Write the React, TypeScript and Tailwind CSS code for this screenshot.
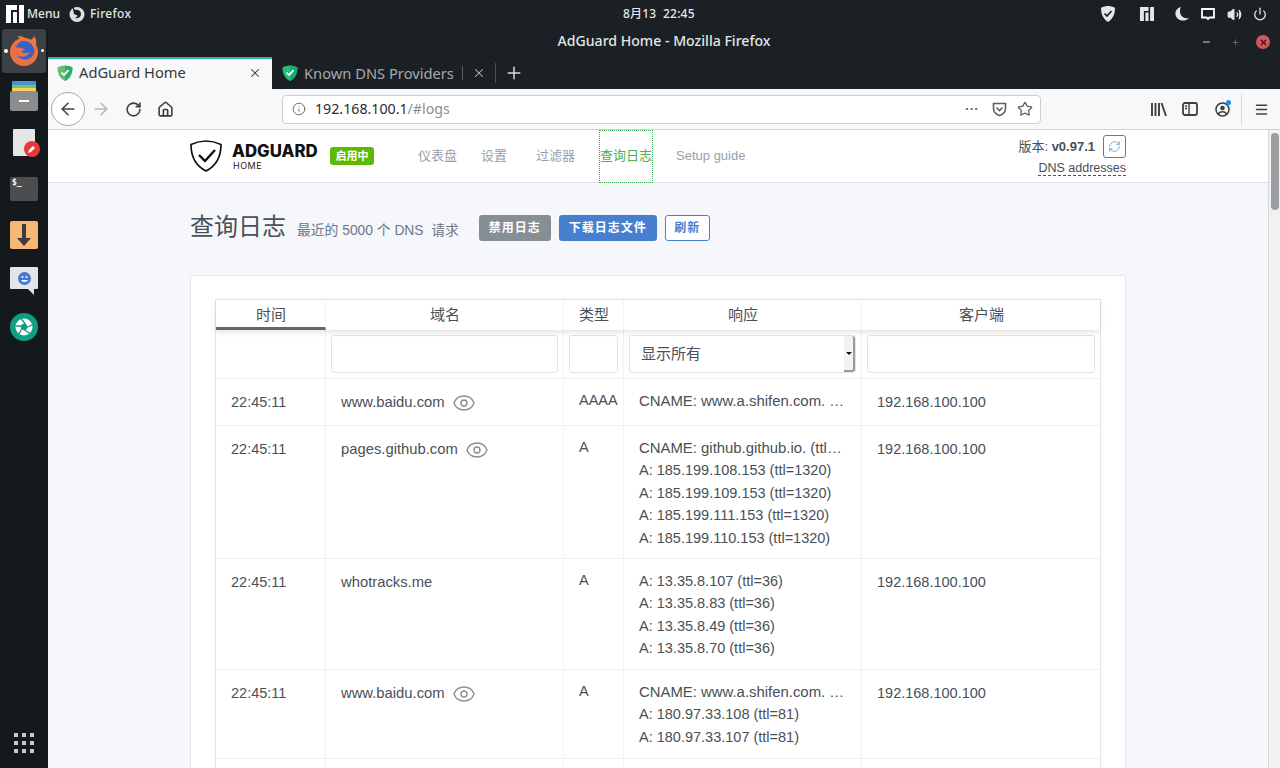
import React from "react";
import { ArrowLeft, ArrowRight, RotateCw, Home, Info, Star, Plus, X, Volume2, Power, Eye, RefreshCw, Menu as MenuIcon } from "lucide-react";

const sans = "[font-family:'Liberation_Sans','Noto_Sans_CJK_SC',sans-serif]";

function Shield({ c = "#68bc71", s = 16 }: { c?: string; s?: number }) {
  return (
    <svg width={s} height={s} viewBox="0 0 16 16" className="shrink-0">
      <path d="M8 0.5C5.5 0.5 3 1.2 0.5 2.4 0.5 9 3 13.5 8 16c5-2.5 7.5-7 7.5-13.6C13 1.2 10.5 0.5 8 0.5z" fill={c} />
      <path d="M8 0.5v15.5c5-2.5 7.5-7 7.5-13.6C13 1.2 10.5 0.5 8 0.5z" fill="#0fa36a" opacity="0.65" />
      <path d="M4.500 7.500l2.600 2.600 4.400-5" fill="none" stroke="#fff" strokeWidth="1.700" />
    </svg>
  );
}

function ManjaroLogo({ s = 18, c = "#fff" }: { s?: number; c?: string }) {
  return (
    <svg width={s} height={s} viewBox="0 0 18 18" className="shrink-0">
      <path d="M0 0h11v5H5v13H0zM7 7h4v11H7zM13 0h5v18h-5z" fill={c} />
    </svg>
  );
}

function FirefoxIcon() {
  return (
    <svg width="30" height="32" viewBox="0 0 30 32">
      <circle cx="15" cy="17" r="14" fill="#ec6f45" />
      <circle cx="16" cy="15" r="9.500" fill="#3a62c2" />
      <path d="M9 1c1 3 3 5 6 5 5 0 9 3 10 8 3-4 3-9 0-13-1 3-3 4-5 4-3-2-7-4-11-4z" fill="#ef7a3e" />
      <path d="M6 13c3-1 7 0 9 1 2 1-1 2-3 2 1 2 5 3 9 1-2 4-7 6-11 4-3-1-5-5-4-8z" fill="#ec6f45" />
    </svg>
  );
}

function Dock() {
  return (
    <div className="w-[48px] h-full flex flex-col items-center bg-[#14191d] relative">
      <div className="w-[44px] h-[44px] mt-[1px] rounded-[3px] bg-[#3c4145] flex items-center justify-center relative">
        <span className="absolute left-[2px] top-[20px] w-[4px] h-[4px] rounded-full bg-white" />
        <span className="absolute right-[2px] top-[20px] w-[3px] h-[3px] rounded-full bg-white" />
        <FirefoxIcon />
      </div>
      <div className="mt-[8px] w-[28px] h-[30px] flex flex-col items-center">
        <div className="w-[24px] h-[4px] bg-[#4a90d9] rounded-t-[1px]" />
        <div className="w-[24px] h-[3px] bg-[#7cc06a]" />
        <div className="w-[24px] h-[3px] bg-[#f4d35e]" />
        <div className="w-[28px] h-[20px] bg-[#8b8d8f] rounded-[2px] flex items-center justify-center">
          <div className="w-[10px] h-[2px] bg-white" />
        </div>
      </div>
      <div className="mt-[18px] w-[32px] h-[28px] relative">
        <div className="ml-[5px] w-[22px] h-[27px] bg-[#e6e6e6] rounded-[1px]" />
        <div className="absolute left-[16px] top-[12px] w-[16px] h-[16px] rounded-full bg-[#e53935] flex items-center justify-center">
          <svg width="10" height="10" viewBox="0 0 10 10"><path d="M1 9l1-3 4-4 2 2-4 4z" fill="#fff" /></svg>
        </div>
      </div>
      <div className="mt-[20px] w-[28px] h-[24px] bg-[#4b4d4f] rounded-[2px] px-[2px] py-0 leading-[12px] text-white text-[8px] font-bold [font-family:'DejaVu_Sans_Mono',monospace]">$_</div>
      <div className="mt-[20px] w-[28px] h-[28px] bg-[#f7b877] rounded-[2px] flex items-center justify-center">
        <svg width="14" height="22" viewBox="0 0 14 22"><path d="M5 0h4v14h5l-7 8-7-8h5z" fill="#3c3c3c" /></svg>
      </div>
      <div className="mt-[18px] w-[28px] h-[28px] relative">
        <div className="w-[28px] h-[22px] bg-[#e4e4e4] rounded-[1px] flex items-center justify-center">
          <svg width="13" height="13" viewBox="0 0 13 13">
            <circle cx="6.500" cy="6.500" r="6.500" fill="#3f78d6" />
            <circle cx="4.500" cy="5" r="1" fill="#fff" />
            <circle cx="8.500" cy="5" r="1" fill="#fff" />
            <path d="M3 8c1 2.500 6 2.500 7 0z" fill="#fff" />
          </svg>
        </div>
        <svg className="absolute left-[18px] top-[22px]" width="6" height="6" viewBox="0 0 6 6"><path d="M0 0h6v6z" fill="#e4e4e4" /></svg>
      </div>
      <div className="mt-[18px] w-[28px] h-[28px] rounded-full bg-[#0f9d85] flex items-center justify-center">
        <svg width="18" height="18" viewBox="0 0 18 18">
          <circle cx="9" cy="9" r="8.500" fill="#fff" />
          <circle cx="9" cy="9" r="3.200" fill="#0f9d85" />
          <path d="M10.500 6.200L6 .5M11.800 9.500L17.500 6.500M9.500 12L15 15.500M6.500 11.500L3.500 16.500M6 8L.6 8" stroke="#0f9d85" strokeWidth="1.400" />
        </svg>
      </div>
      <div className="mt-auto mb-[15px] grid grid-cols-3 gap-[4px]">
        {[0, 1, 2, 3, 4, 5, 6, 7, 8].map((i) => (
          <span key={i} className="w-[4px] h-[4px] bg-[#c8c8c8]" />
        ))}
      </div>
    </div>
  );
}

function TopBar() {
  return (
    <div className="h-[28px] flex items-center bg-[#1a2023] text-[#e6e6e6] text-[12px] font-medium relative [font-family:'Noto_Sans','Noto_Sans_CJK_SC',sans-serif]">
      <div className="ml-[6px]"><ManjaroLogo s={18} /></div>
      <span className="ml-[3px]">Menu</span>
      <svg className="ml-[9px]" width="16" height="16" viewBox="0 0 16 16">
        <circle cx="8" cy="8.500" r="7.500" fill="#e0e0e0" />
        <path d="M4 1l2 3c3-1 6 1 6 4 0 3-3 5-6 4 2-1 3-2 2-3-2 0-4-1-3-3-1 0-1-3-1-5z" fill="#1a2023" />
      </svg>
      <span className="ml-[5px] tracking-[0.300px]">Firefox</span>
      <span className="absolute left-[623px] top-[5px] leading-[18px] tracking-[0.200px]">8月13&nbsp;&nbsp;22:45</span>
      <div className="ml-auto flex items-center">
        <svg width="14" height="16" viewBox="0 0 14 16">
          <path d="M7 0C5 0 2.500 .6 0 1.800 0 8 2 13 7 16c5-3 7-8 7-14.200C11.500 .6 9 0 7 0z" fill="#e6e6e6" />
          <path d="M3.500 7.500l2.500 2.500 4.500-5" fill="none" stroke="#1a2023" strokeWidth="1.700" />
        </svg>
        <div className="ml-[25px]"><ManjaroLogo s={14} c="#e6e6e6" /></div>
        <svg className="ml-[20px]" width="16" height="16" viewBox="0 0 16 16">
          <path d="M7 1C3 2 1 5 1.500 8.500 2 12.500 6 15 10 14.500c2 0 3.500-1 5-2.500C11 13 7.500 11 6.500 8 5.500 5.500 6 3 7 1z" fill="#e6e6e6" />
        </svg>
        <svg className="ml-[11px]" width="14" height="12" viewBox="0 0 14 12">
          <path d="M1 1h12v8.500H8.500L7 11 5.500 9.500H1z" fill="none" stroke="#fff" strokeWidth="1.800" />
        </svg>
        <Volume2 size={15} className="ml-[12px]" stroke="#e6e6e6" strokeWidth={2} fill="#e6e6e6" />
        <Power size={14} className="ml-[11px] mr-[13px]" stroke="#e6e6e6" strokeWidth={2.200} />
      </div>
    </div>
  );
}

function TitleBar() {
  return (
    <div className="h-[29px] flex items-center bg-[#1a2023] relative">
      <div className="flex-1 text-center text-[14.100px] font-medium text-[#e4e6e6] -mt-[4px] [font-family:'Noto_Sans',sans-serif]">AdGuard Home - Mozilla Firefox</div>
      <div className="absolute right-[10px] top-[7px] flex items-center">
        <span className="w-[7px] h-[2px] bg-[#777b7d]" />
        <svg className="ml-[21px]" width="9" height="9" viewBox="0 0 9 9"><path d="M5 0v4h4L5 5 4 9V5H0l4-1z" fill="#6d7173" /></svg>
        <span className="ml-[16px] w-[14px] h-[14px] rounded-full bg-[#d7545f] flex items-center justify-center">
          <X size={9} strokeWidth={3.500} stroke="#222" />
        </span>
      </div>
    </div>
  );
}

function Tabs() {
  return (
    <div className="h-[32px] flex items-stretch bg-[#1a2023] [font-family:'Noto_Sans',sans-serif]">
      <div className="w-[224px] border-t-[2px] border-[#2eb8a0] bg-[#f8f8f8] flex items-center pb-[2px]">
        <div className="ml-[9px]"><Shield s={16} /></div>
        <span className="ml-[6px] text-[14.700px] leading-[20px] text-[#33363a] -mt-[2px]">AdGuard Home</span>
        <X size={14} strokeWidth={1.800} className="ml-auto mr-[10px] text-[#3a3d40]" />
      </div>
      <div className="w-[223px] flex items-center relative">
        <div className="ml-[10px]"><Shield s={16} c="#21c179" /></div>
        <span className="ml-[6px] text-[14.700px] leading-[20px] text-[#a6aaac] -mt-[1px]">Known DNS Providers</span>
        <span className="ml-[8px] w-[1px] h-[14px] bg-[#5a5e60]" />
        <X size={14} strokeWidth={1.800} className="absolute right-[9px] top-[9px] text-[#b8bbbd]" />
      </div>
      <div className="w-[1px] my-[6px] bg-[#4b4f52]" />
      <div className="w-[36px] flex items-center justify-center -mt-[1px]">
        <Plus size={20} strokeWidth={1.800} className="text-[#d8dadb]" />
      </div>
    </div>
  );
}

function Toolbar() {
  return (
    <div className="h-[41px] flex items-center bg-[#f8f8f8] border-b border-[#d3d3d3] text-[#3c3f41] relative">
      <div className="ml-[3px] w-[34px] h-[34px] rounded-full border border-[#a8a8a8] bg-white flex items-center justify-center">
        <ArrowLeft size={20} strokeWidth={1.800} />
      </div>
      <ArrowRight size={20} strokeWidth={1.800} className="ml-[6px] text-[#b5b6b7]" />
      <RotateCw size={17} strokeWidth={2.300} className="ml-[14px]" />
      <Home size={17} strokeWidth={2.300} className="ml-[15px]" />
      <div className="ml-[108px] w-[759px] h-[29px] rounded-[4px] border border-[#cfcfcf] bg-white flex items-center [font-family:'Noto_Sans',sans-serif]">
        <Info size={14} strokeWidth={1.500} className="ml-[9px] text-[#5c5f62]" />
        <span className="ml-[9px] text-[14.200px] text-[#2a2c2e]">192.168.100.1<span className="text-[#8b8e91]">/#logs</span></span>
        <span className="ml-auto text-[13px] font-bold tracking-[1px] text-[#5c5f62] -mt-[6px]">...</span>
        <svg className="ml-[13px]" width="15" height="15" viewBox="0 0 15 15">
          <path d="M1.500 1.500h12v5c0 3.500-3 6-6 7-3-1-6-3.500-6-7z" fill="none" stroke="#5c5f62" strokeWidth="1.600" />
          <path d="M4.500 5.500L7.500 8.500 10.500 5.500" fill="none" stroke="#5c5f62" strokeWidth="1.600" />
        </svg>
        <Star size={16} strokeWidth={1.900} className="ml-[10px] mr-[7px] text-[#5c5f62]" />
      </div>
      <div className="ml-auto flex items-center pr-[11px]">
        <svg width="16" height="15" viewBox="0 0 16 15">
          <path d="M1 1v13M4.500 1v13M8 1v13M10.500 1l4.500 13" fill="none" stroke="#3c3f41" strokeWidth="1.900" />
        </svg>
        <svg className="ml-[15px]" width="16" height="14" viewBox="0 0 16 14">
          <rect x="1" y="1" width="14" height="12" rx="2" fill="none" stroke="#3c3f41" strokeWidth="1.800" />
          <path d="M7 1v12M3 4h2M3 6.500h2" stroke="#3c3f41" strokeWidth="1.400" fill="none" />
        </svg>
        <div className="ml-[17px] relative w-[15px] h-[15px]">
          <svg width="15" height="15" viewBox="0 0 15 15">
            <circle cx="7.500" cy="7.500" r="6.500" fill="none" stroke="#3c3f41" strokeWidth="1.500" />
            <circle cx="7.500" cy="6" r="2.300" fill="#3c3f41" />
            <path d="M3.500 12c1-3 7-3 8 0" fill="none" stroke="#3c3f41" strokeWidth="1.500" />
          </svg>
          <span className="absolute -right-[1px] -top-[2px] w-[5px] h-[5px] rounded-full bg-[#1a8cff]" />
        </div>
        <div className="ml-[11px] w-[1px] h-[32px] bg-[#dcdcdc]" />
        <div className="ml-[12px]"><MenuIcon size={15} strokeWidth={2.400} /></div>
      </div>
    </div>
  );
}

function HeaderNav() {
  return (
    <div className="h-[53px] shrink-0 bg-white border-b border-[#dee1e6] pl-[142px] pr-[142px] flex items-stretch">
      <div className="flex items-center w-[188px]">
        <svg width="32" height="32" viewBox="0 0 32 32" className="shrink-0">
          <path d="M16 1C11 1 6 2.200 1 4.500 1 17 6 26 16 31 26 26 31 17 31 4.500 26 2.200 21 1 16 1z" fill="none" stroke="#111" strokeWidth="1.700" />
          <path d="M9 15l6 6 10-11" fill="none" stroke="#111" strokeWidth="2.400" />
        </svg>
        <div className="ml-[10px] pt-[2px] flex flex-col [font-family:'Inter','Liberation_Sans',sans-serif]">
          <span className="text-[16.800px] leading-[16px] font-extrabold text-[#111]">ADGUARD</span>
          <span className="mt-[1px] text-[9px] leading-[11px] text-[#222] tracking-[0.500px] ml-[1px]">HOME</span>
        </div>
      </div>
      <div className="flex items-center ml-[-48px]">
        <span className={`w-[44px] h-[18px] rounded-[3px] bg-[#5eba00] text-white text-[11px] font-bold flex items-center justify-center ${sans}`}>启用中</span>
      </div>
      <nav className={`ml-[44px] flex items-stretch text-[13px] text-[#9aa0ac] ${sans}`}>
        <span className="flex items-center">仪表盘</span>
        <span className="ml-[24px] flex items-center">设置</span>
        <span className="ml-[29px] flex items-center">过滤器</span>
        <span className="ml-[24px] w-[54px] -mb-[1px] pb-[2px] flex items-center justify-center text-[#4caf50] border border-dotted border-[#3faf55]">查询日志</span>
        <span className="ml-[23px] flex items-center">Setup guide</span>
      </nav>
      <div className={`ml-auto pt-[5px] flex flex-col items-end text-[#495057] ${sans}`}>
        <div className="flex items-center h-[23px] text-[13px]">
          <span>版本: <b className="font-bold">v0.97.1</b></span>
          <span className="ml-[8px] w-[23px] h-[23px] rounded-[3px] border border-[#467fcf] flex items-center justify-center">
            <RefreshCw size={13} strokeWidth={1.200} className="text-[#467fcf]" />
          </span>
        </div>
        <span className="mt-[3px] text-[12.500px] leading-[14px] border-b border-dashed border-[#495057]">DNS addresses</span>
      </div>
    </div>
  );
}

const gridCols = "grid grid-cols-[110px_238px_60px_238px_238px]";

function Row({ time, domain, eye, type, lines, h }: { time: string; domain: string; eye?: boolean; type: string; lines: string[]; h: string }) {
  return (
    <div className={`${gridCols} ${h} border-b border-[#eceef1] text-[14.500px] leading-[22.400px] text-[#495057]`}>
      <div className="pl-[15px] pt-[12px] border-r border-[#f1f2f4]">{time}</div>
      <div className="pl-[15px] pt-[12px] border-r border-[#f1f2f4] flex items-start">
        <span className="text-[14.800px]">{domain}</span>
        {eye ? <Eye size={24} strokeWidth={1.400} className="ml-[7px] text-[#868e96]" /> : null}
      </div>
      <div className="pl-[15px] pt-[10px] border-r border-[#f1f2f4]">{type}</div>
      <div className="pl-[15px] pr-[15px] pt-[11px] border-r border-[#f1f2f4] min-w-0">
        {lines.map((l, i) => (
          <div key={i} className={l.startsWith("CNAME") ? "truncate text-[14.900px]" : "truncate"}>{l}</div>
        ))}
      </div>
      <div className="pl-[15px] pt-[12px]">192.168.100.100</div>
    </div>
  );
}

function Page() {
  return (
    <div className="flex-1 min-h-0 flex relative">
      <div className={`flex-1 min-w-0 flex flex-col bg-[#f5f7fb] overflow-hidden ${sans}`}>
        <HeaderNav />
        <div className="pl-[142px] pr-[142px]">
          <div className="h-[92px] flex items-start pt-[29px]">
            <span className="text-[24px] leading-[30px] text-[#495057]">查询日志</span>
            <span className="ml-[11px] mt-[9px] text-[13.800px] leading-[20px] text-[#6e7687]">最近的 5000 个 DNS&nbsp;&nbsp;请求</span>
            <span className="ml-[20px] mt-[3px] w-[72px] h-[26px] rounded-[3px] bg-[#868e96] text-white text-[12px] font-bold tracking-[1px] flex items-center justify-center">禁用日志</span>
            <span className="ml-[8px] mt-[3px] w-[98px] h-[26px] rounded-[3px] bg-[#467fcf] text-white text-[12px] font-bold tracking-[1px] flex items-center justify-center">下载日志文件</span>
            <span className="ml-[8px] mt-[3px] w-[45px] h-[26px] rounded-[3px] border border-[#467fcf] bg-white text-[#467fcf] text-[12px] font-bold tracking-[1px] flex items-center justify-center">刷新</span>
          </div>
          <div className="w-[936px] rounded-[3px] border border-[#e5e7eb] bg-white pt-[23px] px-[24px] pb-[40px]">
            <div className="w-[886px] border-x border-t border-[#e4e6ea]">
              <div className={`${gridCols} h-[30px] shadow-[0_2px_6px_rgba(0,0,0,0.12)] relative text-[15px] text-[#495057] text-center`}>
                <div className="flex items-center justify-center pt-[4px] pl-[1px] border-b-[3px] border-[#666] border-r border-r-[#f1f2f4]">时间</div>
                <div className="flex items-center justify-center pt-[1px] pl-[1px] border-r border-[#f1f2f4]">域名</div>
                <div className="flex items-center justify-center pt-[1px] pl-[1px] border-r border-[#f1f2f4]">类型</div>
                <div className="flex items-center justify-center pt-[1px] pl-[1px] border-r border-[#f1f2f4]">响应</div>
                <div className="flex items-center justify-center pt-[1px] pl-[1px]">客户端</div>
              </div>
              <div className={`${gridCols} h-[49px] border-b border-[#eceef1]`}>
                <div className="border-r border-[#f1f2f4]" />
                <div className="border-r border-[#f1f2f4] px-[5px] pt-[5px]">
                  <div className="h-[38px] rounded-[3px] border border-[#dfe2e6] bg-white" />
                </div>
                <div className="border-r border-[#f1f2f4] px-[5px] pt-[5px]">
                  <div className="h-[38px] rounded-[3px] border border-[#dfe2e6] bg-white" />
                </div>
                <div className="border-r border-[#f1f2f4] px-[5px] pt-[5px]">
                  <div className="h-[38px] rounded-[3px] border border-[#dfe2e6] bg-white flex items-center pl-[11px] text-[15px] text-[#495057] relative">
                    显示所有
                    <span className="absolute right-0 top-0 bottom-0 w-[11px] bg-[#f2f2f2] border-r-2 border-b-2 border-[#9a9a9a] rounded-r-[3px] flex items-center justify-center">
                      <span className="w-0 h-0 border-x-[3px] border-x-transparent border-t-[3px] border-t-[#111]" />
                    </span>
                  </div>
                </div>
                <div className="px-[5px] pt-[5px]">
                  <div className="h-[38px] rounded-[3px] border border-[#dfe2e6] bg-white" />
                </div>
              </div>
              <Row h="h-[47px]" time="22:45:11" domain="www.baidu.com" eye type="AAAA" lines={["CNAME: www.a.shifen.com. (ttl=81)"]} />
              <Row h="h-[133px]" time="22:45:11" domain="pages.github.com" eye type="A" lines={["CNAME: github.github.io. (ttl=1320)", "A: 185.199.108.153 (ttl=1320)", "A: 185.199.109.153 (ttl=1320)", "A: 185.199.111.153 (ttl=1320)", "A: 185.199.110.153 (ttl=1320)"]} />
              <Row h="h-[111px]" time="22:45:11" domain="whotracks.me" type="A" lines={["A: 13.35.8.107 (ttl=36)", "A: 13.35.8.83 (ttl=36)", "A: 13.35.8.49 (ttl=36)", "A: 13.35.8.70 (ttl=36)"]} />
              <Row h="h-[89px]" time="22:45:11" domain="www.baidu.com" eye type="A" lines={["CNAME: www.a.shifen.com. (ttl=81)", "A: 180.97.33.108 (ttl=81)", "A: 180.97.33.107 (ttl=81)"]} />
              <div className={`${gridCols} h-[40px]`}>
                <div className="border-r border-[#f1f2f4]" />
                <div className="border-r border-[#f1f2f4]" />
                <div className="border-r border-[#f1f2f4]" />
                <div className="border-r border-[#f1f2f4]" />
                <div />
              </div>
            </div>
          </div>
        </div>
      </div>
      <div className="w-[12px] bg-[#f1f1f1] border-l border-[#d8d8d8] relative">
        <div className="absolute left-[2px] top-[3px] w-[8px] h-[77px] rounded-[4px] bg-[#9b9fa1]" />
      </div>
    </div>
  );
}

export default function App() {
  return (
    <div className="w-[1280px] h-[768px] overflow-hidden flex flex-col bg-[#1a2023]">
      <TopBar />
      <div className="flex-1 min-h-0 flex">
        <Dock />
        <div className="flex-1 min-w-0 flex flex-col">
          <TitleBar />
          <Tabs />
          <Toolbar />
          <Page />
        </div>
      </div>
    </div>
  );
}
